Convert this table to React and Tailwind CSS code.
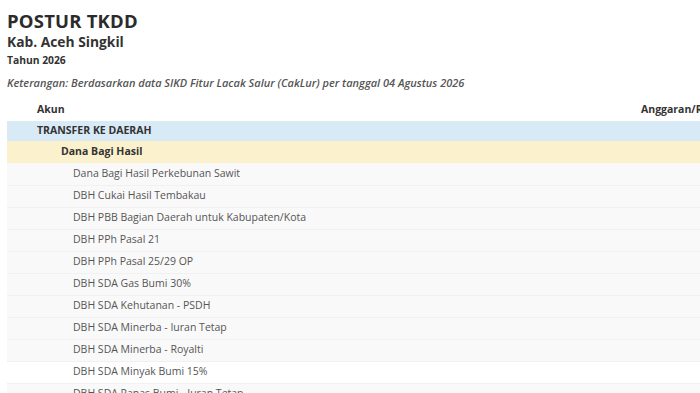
import React from 'react';

const items = [
  'Dana Bagi Hasil Perkebunan Sawit',
  'DBH Cukai Hasil Tembakau',
  'DBH PBB Bagian Daerah untuk Kabupaten/Kota',
  'DBH PPh Pasal 21',
  'DBH PPh Pasal 25/29 OP',
  'DBH SDA Gas Bumi 30%',
  'DBH SDA Kehutanan - PSDH',
  'DBH SDA Minerba - Iuran Tetap',
  'DBH SDA Minerba - Royalti',
  'DBH SDA Minyak Bumi 15%',
  'DBH SDA Panas Bumi - Iuran Tetap',
];

export default function App() {
  return (
    <div className="w-[700px] h-[393px] overflow-hidden bg-white text-[#333] font-['Open_Sans',sans-serif]">
      <div className="pl-[7px] pt-[10px]">
        <h1 className="text-[18.5px] font-bold leading-[22px] tracking-[0.2px] text-[#2b2b2b]">POSTUR TKDD</h1>
        <h2 className="mt-[2px] text-[13.8px] font-bold leading-[16px] text-[#333]">Kab. Aceh Singkil</h2>
        <p className="mt-[4px] text-[10.3px] font-bold leading-[13px] text-[#333]">Tahun 2026</p>
        <p className="mt-[9px] text-[11px] italic font-semibold leading-[14px] text-[#555]">
          Keterangan: Berdasarkan data SIKD Fitur Lacak Salur (CakLur) per tanggal 04 Agustus 2026
        </p>

        <table className="mt-[8px] w-[760px] border-collapse text-[10.5px]">
          <thead>
            <tr className="h-[23px]">
              <th className="pl-[30px] text-left font-bold text-[#333]">Akun</th>
              <th className="w-[126px] text-left font-bold text-[#333]">Anggaran/Realisasi</th>
            </tr>
          </thead>
          <tbody>
            <tr className="h-[20px] bg-[#d9eaf7]">
              <td className="pl-[30px] font-bold text-[#333]">TRANSFER KE DAERAH</td>
              <td></td>
            </tr>
            <tr className="h-[22px] bg-[#fbf1cd]">
              <td className="pl-[54px] font-bold text-[#333]">Dana Bagi Hasil</td>
              <td></td>
            </tr>
            {items.map((name, i) => (
              <tr
                key={name}
                className={`h-[22px] border-b border-[#f1f1f1] ${i === 9 ? 'bg-white' : 'bg-[#f9f9f9]'}`}
              >
                <td className="pl-[66px] font-medium text-[#555]">{name}</td>
                <td></td>
              </tr>
            ))}
          </tbody>
        </table>
      </div>
    </div>
  );
}
